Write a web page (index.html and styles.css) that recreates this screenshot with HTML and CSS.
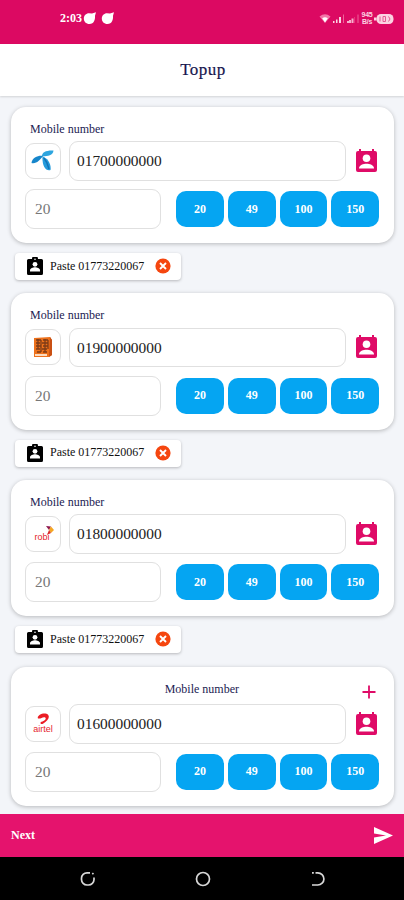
FILE: index.html
```html
<!DOCTYPE html>
<html lang="en">
<head>
    <meta charset="UTF-8">
    <meta name="viewport" content="width=device-width, initial-scale=1.0">
    <title>Topup</title>
    <link rel="stylesheet" href="styles.css">
</head>
<body>
    <!-- shared icons -->
    <svg class="sprite" width="0" height="0">
        <symbol id="contact" viewBox="0 0 21 24">
            <path fill="#df0b67" d="M3 0h2v2h11V0h2v2h1a2 2 0 0 1 2 2v17a2 2 0 0 1-2 2H2a2 2 0 0 1-2-2V4a2 2 0 0 1 2-2h1z"/>
            <circle cx="10.5" cy="9.200" r="3.800" fill="#fff"/>
            <path fill="#fff" d="M3 19.500c0-3.400 4.500-4.800 7.500-4.800s7.500 1.400 7.500 4.800z"/>
        </symbol>
        <symbol id="clipboard" viewBox="0 0 16 18">
            <path d="M1.500 2H5a3 3 0 0 1 6 0h3.500A1.500 1.500 0 0 1 16 3.500v13a1.500 1.500 0 0 1-1.500 1.500h-13A1.500 1.500 0 0 1 0 16.500v-13A1.500 1.500 0 0 1 1.500 2z"/>
            <circle cx="8" cy="2.200" r=".8" fill="#fff"/>
            <circle cx="8" cy="7.300" r="2.400" fill="#fff"/>
            <path fill="#fff" d="M3 14.500v-1.300c0-2 3-3 5-3s5 1 5 3v1.300z"/>
        </symbol>
        <symbol id="close" viewBox="0 0 16 16">
            <circle cx="8" cy="8" r="7.600" fill="#f5460f"/>
            <path d="M5 5l6 6M11 5l-6 6" stroke="#fff" stroke-width="1.900"/>
        </symbol>
        <symbol id="blob" viewBox="0 0 14 13">
            <path fill="#fff" d="M6 1.200l3 .3L13 .3l-1 3.500c.3 4-1 8.200-5.500 8.200C3 12 .8 9.500.8 6.500S3 1.200 6 1.200z"/>
        </symbol>
    </svg>

    <div class="phone">
        <div class="status-bar">
            <span class="clock">2:03</span>
            <svg class="blob" width="14" height="13"><use href="#blob"/></svg>
            <svg class="blob second" width="14" height="13"><use href="#blob"/></svg>
            <div class="status-icons">
                <svg width="12" height="12" viewBox="0 0 12 12">
                    <path d="M.5 3.500Q6-1 11.500 3.500L6 10z" fill="#f276a8"/>
                    <path d="M3.200 5.200Q6 3.500 8.800 5.200L6 9.500z" fill="#fff"/>
                </svg>
                <svg width="13" height="12" viewBox="0 0 13 12">
                    <path d="M1 8h1.500v2H1zM4 6.500h1.500V10H4zM7 4h2v6H7z" fill="#fbd3e2"/>
                    <path d="M11 1.500h1V10h-1z" fill="#ee6299"/>
                </svg>
                <svg width="14" height="12" viewBox="0 0 14 12">
                    <path d="M1 8h2v2H1zM3 7h2v3H3zM5.500 5.500h2V10h-2z" fill="#f7aecb"/>
                    <path d="M8.500 4H9v6h-.5zM11.500 1.500h1V10h-1z" fill="#ee6299"/>
                </svg>
                <span class="speed">945<br>B/s</span>
                <svg width="20" height="12" viewBox="0 0 20 12">
                    <path d="M0 4.500h2.500v3H0z" fill="#fbd3e2"/>
                    <rect x="2.500" y="1" width="17" height="10" rx="4.500" fill="#fbd3e2"/>
                    <path d="M6 3.500v5M9 3.500h2.500v5H9zM14.500 3.500q3 2.500 0 5" fill="none" stroke="#e45a92"/>
                </svg>
            </div>
        </div>
        <div class="header">Topup</div>

        <div class="content">
            <div class="card">
                <div class="label">Mobile number</div>
                <div class="row number-row">
                    <div class="operator gp">
                        <svg width="23" height="21" viewBox="0 0 23 21">
                            <path d="M11 6.500C10.500 2 16 0 22.500.5 22 5.500 17 6 11.500 6.500z" fill="#2da5df"/>
                            <path d="M12 6C8 5 1 7.500.5 13c5 1 8-2.500 11.500-7z" fill="#1686cb"/>
                            <path d="M11.500 6.500c5 1.500 9 7.500 8 13.500-5 1.500-8.500-4.500-8-13.500z" fill="#239bdc"/>
                            <path d="M13 8c2.500 3 4 6.500 5 11" fill="none" stroke="#1373b6" stroke-width="1.500"/>
                        </svg>
                    </div>
                    <div class="number">01700000000</div>
                    <svg class="contact" width="21" height="24"><use href="#contact"/></svg>
                </div>
                <div class="row amount-row">
                    <div class="amount">20</div>
                    <div class="quick">
                        <button>20</button><button>49</button><button>100</button><button>150</button>
                    </div>
                </div>
            </div>
            <div class="paste">
                <svg width="16" height="18"><use href="#clipboard"/></svg>
                <span>Paste 01773220067</span>
                <svg width="16" height="16"><use href="#close"/></svg>
            </div>

            <div class="card">
                <div class="label">Mobile number</div>
                <div class="row number-row">
                    <div class="operator">
                        <svg width="20" height="20" viewBox="0 0 20 20">
                            <path d="M1 1l16-1 2 3v15l-3 2H1z" fill="#ed711b"/>
                            <path d="M17 0l2 3v15l-3 2z" fill="#c95014"/>
                            <path d="M3 3h5M10 3h5M3 6h4M9 6h6M3 9h5M10 9h5M3 12h4M9 12h5M4 15h4M10 15h4M5 2v10M8 3v12M12 2v13M15 3v9" stroke="#7c3b18" stroke-width="1.300"/>
                            <path d="M2 18h12" stroke="#fff0df" stroke-width="1.700"/>
                        </svg>
                    </div>
                    <div class="number">01900000000</div>
                    <svg class="contact" width="21" height="24"><use href="#contact"/></svg>
                </div>
                <div class="row amount-row">
                    <div class="amount">20</div>
                    <div class="quick">
                        <button>20</button><button>49</button><button>100</button><button>150</button>
                    </div>
                </div>
            </div>
            <div class="paste">
                <svg width="16" height="18"><use href="#clipboard"/></svg>
                <span>Paste 01773220067</span>
                <svg width="16" height="16"><use href="#close"/></svg>
            </div>

            <div class="card">
                <div class="label">Mobile number</div>
                <div class="row number-row">
                    <div class="operator robi">
                        <svg width="9" height="9" viewBox="0 0 9 9">
                            <path d="M1 0l5 .5L4 4z" fill="#8e174d"/>
                            <path d="M6 .5L9 4 6 7 4 4z" fill="#f5a623"/>
                            <path d="M4 4l2 3-4 2z" fill="#d92b2b"/>
                        </svg>
                        <span>robi</span>
                    </div>
                    <div class="number">01800000000</div>
                    <svg class="contact" width="21" height="24"><use href="#contact"/></svg>
                </div>
                <div class="row amount-row">
                    <div class="amount">20</div>
                    <div class="quick">
                        <button>20</button><button>49</button><button>100</button><button>150</button>
                    </div>
                </div>
            </div>
            <div class="paste">
                <svg width="16" height="18"><use href="#clipboard"/></svg>
                <span>Paste 01773220067</span>
                <svg width="16" height="16"><use href="#close"/></svg>
            </div>

            <div class="card last">
                <div class="label-row">
                    <div class="label">Mobile number</div>
                    <svg width="14" height="14" viewBox="0 0 14 14">
                        <path d="M7 .5v13M.5 7h13" stroke="#df0b67" stroke-width="1.800"/>
                    </svg>
                </div>
                <div class="row number-row">
                    <div class="operator airtel">
                        <svg width="13" height="12" viewBox="0 0 13 12">
                            <path d="M1 5.500C-.5 3 5-.5 9.500.8c4.500 2 2 7-3.500 10-3 1-3.500-2-.5-2.300C9.500 7 9.500 4.200 7 4.200c-2 0-3 1.600-6 1.300z" fill="#eb1c24"/>
                        </svg>
                        <span>airtel</span>
                    </div>
                    <div class="number">01600000000</div>
                    <svg class="contact" width="21" height="24"><use href="#contact"/></svg>
                </div>
                <div class="row amount-row">
                    <div class="amount">20</div>
                    <div class="quick">
                        <button>20</button><button>49</button><button>100</button><button>150</button>
                    </div>
                </div>
            </div>
        </div>

        <div class="footer">
            <span>Next</span>
            <svg width="19" height="17" viewBox="0 0 19 17">
                <path d="M0 0l19 8.500L0 17V10.500L12 8.500 0 6.500z" fill="#fff"/>
            </svg>
        </div>
        <div class="nav-bar">
            <svg width="16" height="16" viewBox="0 0 16 16" fill="none" stroke="#d8d8d8" stroke-width="1.700">
                <path d="M10 1.800H7A5.500 5.500 0 0 0 1.500 7.300v1.200A5.500 5.500 0 0 0 7 14h1.500A5.500 5.500 0 0 0 14 8.500V6.500M12.300 3.200l1.200-1"/>
            </svg>
            <svg width="16" height="16" viewBox="0 0 16 16" fill="none" stroke="#d8d8d8" stroke-width="1.700">
                <circle cx="8" cy="8" r="6.500"/>
            </svg>
            <svg width="16" height="16" viewBox="0 0 16 16" fill="none" stroke="#d8d8d8" stroke-width="1.700">
                <path d="M5.500 1.800h2.300a6.100 6.100 0 0 1 0 12.200H2M2 1.800h1.800"/>
            </svg>
        </div>
    </div>
</body>
</html>
```
FILE: styles.css
```css
* {
    box-sizing: border-box;
}
body {
    margin: 0;
    font-family: "Liberation Serif", "Times New Roman", serif;
    font-size: 12px;
    color: #222;
}
svg {
    display: block;
    flex: none;
}
.sprite {
    display: none;
}
.phone {
    display: flex;
    flex-direction: column;
    height: 900px;
    overflow: hidden;
    background: #f3f5f9;
}
.status-bar {
    display: flex;
    align-items: center;
    flex: none;
    height: 44px;
    padding: 0 10px 7px 60px;
    background: #dc0962;
    color: #fff;
}
.clock {
    width: 22.5px;
    font-weight: bold;
}
.blob.second {
    margin-left: 4px;
}
.status-icons {
    display: flex;
    align-items: center;
    margin-left: auto;
    gap: 1px;
}
.speed {
    width: 12px;
    font-family: "Liberation Sans", Arial, sans-serif;
    font-size: 7px;
    font-weight: bold;
    line-height: 6.5px;
    color: #fbd3e2;
    letter-spacing: -0.3px;
    text-align: center;
}
.header {
    flex: none;
    height: 52px;
    line-height: 52px;
    background: #fff;
    color: #17174f;
    font-size: 17px;
    letter-spacing: 0.5px;
    text-align: center;
    padding-left: 2px;
    -webkit-text-stroke: 0.2px;
    box-shadow: 0 1px 2px rgba(0, 0, 0, 0.14);
}
.content {
    flex: 1;
    min-height: 0;
    padding: 10.5px 10.4px 0 10.5px;
}
.card {
    height: 136.5px;
    padding: 15px 14px 14px 14.5px;
    background: #fff;
    border-radius: 15px;
    box-shadow: 0 1px 4px rgba(0, 0, 0, 0.25);
}
.label {
    height: 14px;
    margin: 0 0 5.5px 5px;
    line-height: 14px;
    color: #222252;
}
.row {
    display: flex;
    align-items: center;
}
.number-row {
    height: 39.5px;
    margin-bottom: 8.5px;
}
.operator {
    display: flex;
    align-items: center;
    justify-content: center;
    width: 36px;
    height: 36px;
    border: 1px solid #e0e0e0;
    border-radius: 9px;
}
.gp {
    padding-right: 1px;
}
.robi, .airtel {
    flex-direction: column;
    font-family: "Liberation Sans", Arial, sans-serif;
    color: #e5232b;
}
.robi svg {
    margin-left: 13px;
}
.robi span {
    margin-top: -2px;
    padding-right: 2px;
    font-size: 9px;
    line-height: 9px;
}
.airtel span {
    font-size: 9px;
    line-height: 9px;
}
.number {
    width: 277.5px;
    height: 39.5px;
    margin-left: 7.5px;
    padding-left: 7.5px;
    border: 1px solid #e0e0e0;
    border-radius: 9px;
    font-size: 15.4px;
    line-height: 38px;
}
.contact {
    margin-left: 10px;
}
.amount-row {
    height: 40px;
}
.amount {
    width: 136px;
    height: 40px;
    padding-left: 9px;
    border: 1px solid #e0e0e0;
    border-radius: 9px;
    color: #777;
    font-size: 15.4px;
    line-height: 38px;
}
.quick {
    display: flex;
    gap: 4px;
    margin-left: 15px;
}
button {
    width: 47.8px;
    height: 36px;
    padding: 0;
    border: none;
    border-radius: 10px;
    background: #05a5f2;
    color: #fff;
    font-family: inherit;
    font-size: 12px;
    font-weight: bold;
}
.paste {
    display: flex;
    align-items: center;
    width: 166.5px;
    height: 27px;
    margin: 10px 0 13.2px 4px;
    padding: 0 0 1px 12px;
    background: #fff;
    border-radius: 4px;
    box-shadow: 0 1px 3px rgba(0, 0, 0, 0.25);
    color: #111;
}
.paste span {
    width: 112px;
    padding-left: 7.5px;
    white-space: nowrap;
}
.card.last {
    height: 139px;
}
.label-row {
    display: grid;
    grid-template-columns: 1fr 14px;
    height: 22.5px;
    padding-right: 4px;
}
.label-row .label {
    padding-left: 17px;
    margin: 0;
    text-align: center;
}
.label-row svg {
    margin-top: 3.5px;
}
.last .number-row {
    margin-bottom: 8px;
}
.footer {
    display: flex;
    align-items: center;
    justify-content: space-between;
    flex: none;
    height: 43px;
    padding: 0 11px;
    background: #e5136d;
    color: #fff;
    font-weight: bold;
}
.nav-bar {
    display: flex;
    align-items: center;
    justify-content: center;
    gap: 99px;
    flex: none;
    height: 43px;
    padding-left: 1px;
    background: #000;
}
```
